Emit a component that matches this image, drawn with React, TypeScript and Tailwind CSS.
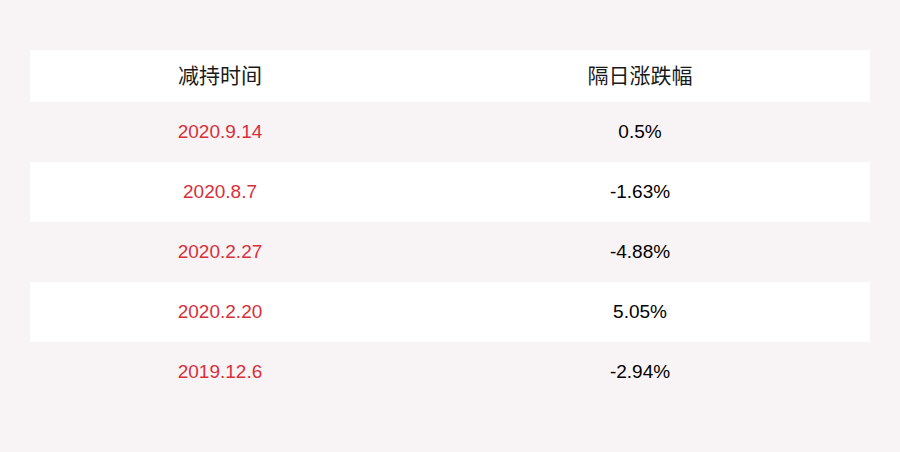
const rows = [
  { date: '2020.9.14', change: '0.5%' },
  { date: '2020.8.7', change: '-1.63%' },
  { date: '2020.2.27', change: '-4.88%' },
  { date: '2020.2.20', change: '5.05%' },
  { date: '2019.12.6', change: '-2.94%' },
];

const App = () => {
  return (
    <div
      className="w-[900px] h-[452px] bg-[#f8f4f5] pt-[50px] px-[30px]"
      style={{ fontFamily: '"Liberation Sans", "Noto Sans CJK SC", sans-serif' }}
    >
      <div className="flex h-[52px] bg-white items-center text-[21px] text-[#1a1a1a]">
        <div className="w-[380px] text-center">减持时间</div>
        <div className="flex-1 text-center">隔日涨跌幅</div>
      </div>
      {rows.map((r, i) => (
        <div
          key={r.date}
          className={`flex h-[60px] items-center text-[19px] ${i % 2 === 1 ? 'bg-white' : ''}`}
        >
          <div className="w-[380px] text-center text-[#d8303b]">{r.date}</div>
          <div className="flex-1 text-center text-black">{r.change}</div>
        </div>
      ))}
    </div>
  );
};

export default App;
